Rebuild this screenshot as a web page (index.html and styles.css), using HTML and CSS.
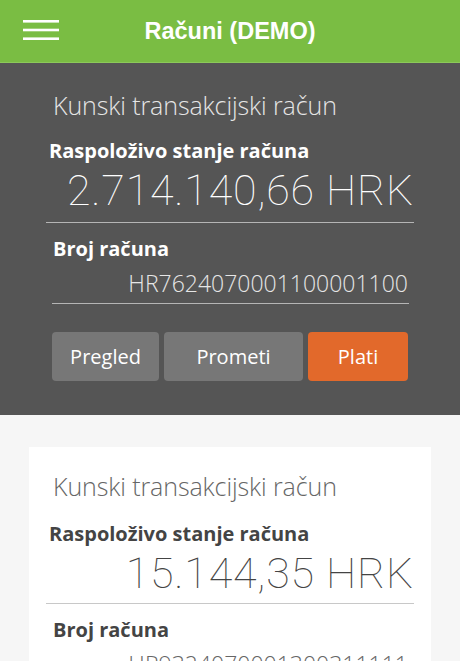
FILE: index.html
```html
<!DOCTYPE html>
<html lang="hr">
<head>
<meta charset="utf-8">
<title>Računi (DEMO)</title>
<link rel="stylesheet" href="styles.css">
</head>
<body>
<header class="topbar">
  <button class="menu" aria-label="Izbornik">
    <svg width="36" height="22" viewBox="0 0 36 22"><rect x="0" y="0" width="36" height="2.6" fill="#fff"/><rect x="0" y="8.7" width="36" height="2.6" fill="#fff"/><rect x="0" y="17.4" width="36" height="2.6" fill="#fff"/></svg>
  </button>
  <h1 class="title">Računi (DEMO)</h1>
</header>
<section class="selected">
  <div class="account dark">
    <h2 class="acc-name">Kunski transakcijski račun</h2>
    <div class="label">Raspoloživo stanje računa</div>
    <div class="amount">2.714.140,66 HRK</div>
    <div class="label label-num">Broj računa</div>
    <div class="iban">HR7624070001100001100</div>
    <div class="actions">
      <button class="btn btn-grey btn-pregled">Pregled</button>
      <button class="btn btn-grey btn-prometi">Prometi</button>
      <button class="btn btn-orange btn-plati">Plati</button>
    </div>
  </div>
</section>
<section class="list">
  <div class="card">
    <div class="account light">
      <h2 class="acc-name">Kunski transakcijski račun</h2>
      <div class="label">Raspoloživo stanje računa</div>
      <div class="amount">15.144,35 HRK</div>
      <div class="label label-num">Broj računa</div>
      <div class="iban">HR9324070001300311111</div>
    </div>
  </div>
</section>
</body>
</html>
```
FILE: styles.css
```css
html, body {
  margin: 0;
  padding: 0;
}
body {
  width: 460px;
  height: 661px;
  overflow: hidden;
  background: #f6f6f6;
  font-family: "Open Sans", "Liberation Sans", sans-serif;
}
.topbar {
  height: 62px;
  background: #7abd43;
  border-bottom: 1px solid #8cc95a;
  display: flex;
  align-items: center;
  position: relative;
}
.menu {
  background: none;
  border: 0;
  padding: 0;
  margin-left: 23px;
  width: 36px;
  height: 22px;
  display: flex;
}
.title {
  margin: 0;
  position: absolute;
  left: 0;
  right: 0;
  text-align: center;
  font-family: "Liberation Sans", Arial, sans-serif;
  font-weight: bold;
  font-size: 23.5px;
  color: #fff;
  pointer-events: none;
}
.selected {
  background: #555555;
  height: 352px;
}
.account {
  display: flex;
  flex-direction: column;
}
.dark {
  padding: 26px 46px 0 46px;
  color: #fff;
}
.acc-name {
  margin: 0 0 0 7px;
  font-weight: 300;
  font-size: 25px;
  line-height: 32px;
  color: #e6e6e6;
  letter-spacing: -0.1px;
}
.label {
  margin-top: 18px;
  margin-left: 3px;
  font-weight: 700;
  font-size: 20px;
  line-height: 24px;
}
.amount {
  margin-top: 2px;
  font-family: Roboto, "Liberation Sans", sans-serif;
  font-weight: 100;
  font-size: 43px;
  line-height: 50px;
  text-align: right;
  padding-bottom: 7px;
  border-bottom: 1px solid #b5b5b5;
  letter-spacing: 0.8px;
}
.label-num {
  margin-top: 14px;
  margin-left: 7px;
}
.iban {
  margin: 5px 5px 0 6px;
  font-weight: 300;
  font-size: 23px;
  line-height: 34px;
  text-align: right;
  padding-right: 1px;
  padding-bottom: 3px;
  border-bottom: 1px solid #b5b5b5;
  color: #e6e6e6;
}
.actions {
  display: flex;
  gap: 5px;
  margin: 28px 5px 0 6px;
}
.btn {
  height: 49px;
  border: 0;
  border-radius: 4px;
  color: #fff;
  font-family: "Open Sans", sans-serif;
  font-size: 20px;
  padding: 0;
}
.btn-grey { background: #777777; }
.btn-orange { background: #e2692b; }
.btn-pregled { width: 107px; }
.btn-prometi { width: 139px; }
.btn-plati { width: 100px; }
.list {
  padding: 32px 29px 0 29px;
}
.card {
  background: #ffffff;
  padding: 23px 17px 0 17px;
}
.light {
  color: #444444;
}
.light .acc-name {
  color: #666666;
}
.light .label {
  margin-top: 20px;
}
.light .label-num {
  margin-top: 14px;
}
.light .amount {
  color: #444444;
  padding-bottom: 5px;
  border-bottom-color: #c8c8c8;
}
.light .iban {
  color: #666666;
}
```
